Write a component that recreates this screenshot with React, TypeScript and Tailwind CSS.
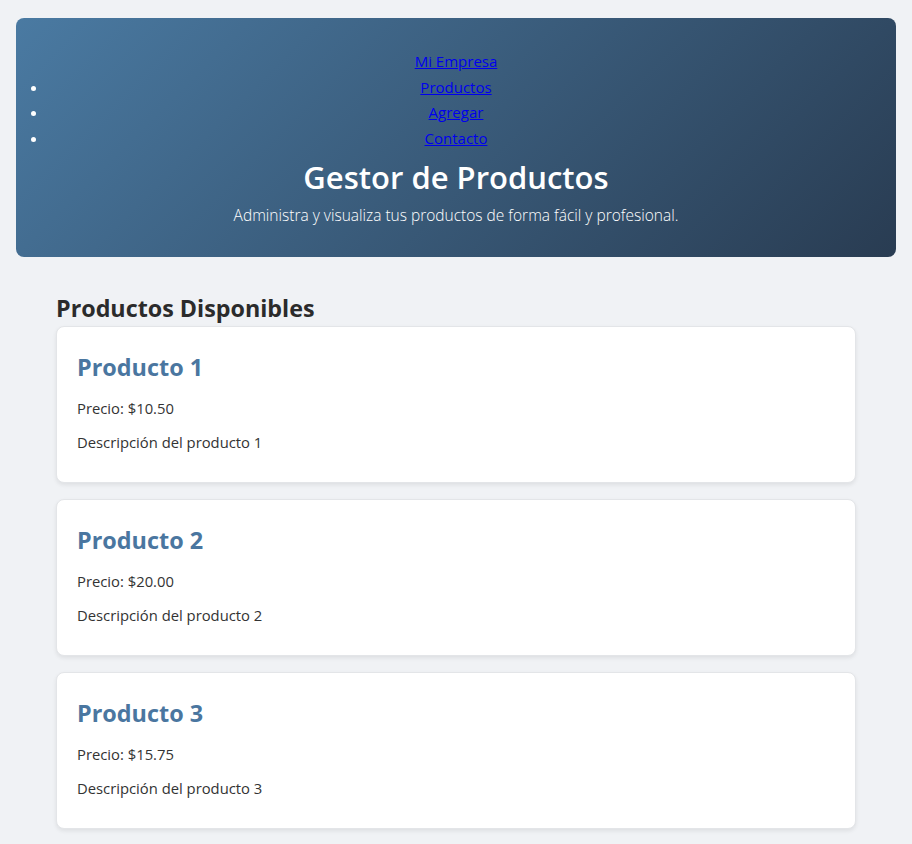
import React from 'react';

const productos = [
  { id: 1, nombre: 'Producto 1', precio: '10.50', descripcion: 'Descripción del producto 1' },
  { id: 2, nombre: 'Producto 2', precio: '20.00', descripcion: 'Descripción del producto 2' },
  { id: 3, nombre: 'Producto 3', precio: '15.75', descripcion: 'Descripción del producto 3' },
];

export default function App() {
  return (
    <div
      className="min-h-screen bg-[#f0f2f5] text-[#333] leading-[1.6]"
      style={{ fontFamily: '"Open Sans", "Noto Sans", sans-serif' }}
    >
      {/* cabecera */}
      <header className="mx-4 pt-[18px]">
        <div className="rounded-lg bg-[linear-gradient(135deg,#4a7aa2,#293c52)] px-8 pt-[31px] pb-[30px] text-center text-white">
          <nav className="text-[15px] leading-[25.6px]">
            <a href="#" className="text-[#0000ee] underline">Mi Empresa</a>
            <ul className="list-disc">
              <li><a href="#" className="text-[#0000ee] underline">Productos</a></li>
              <li><a href="#" className="text-[#0000ee] underline">Agregar</a></li>
              <li><a href="#" className="text-[#0000ee] underline">Contacto</a></li>
            </ul>
          </nav>
          <h1 className="mt-[6px] text-[31px] font-semibold leading-[1.3]">Gestor de Productos</h1>
          <p className="mt-[5px] text-[15.5px] font-light">
            Administra y visualiza tus productos de forma fácil y profesional.
          </p>
        </div>
      </header>

      {/* lista */}
      <main className="mx-auto mt-[36px] w-[800px] pb-4">
        <h2 className="text-[23.3px] font-bold leading-[1.3] text-[#2b2b2b]">Productos Disponibles</h2>
        <div className="mt-[2px] flex flex-col gap-[16px]">
          {productos.map(p => (
            <div
              key={p.id}
              className="rounded-lg border border-[#e3e5e8] bg-white px-5 pt-[21px] pb-[28px] shadow-[0_2px_4px_rgba(0,0,0,0.08)]"
            >
              <h3 className="text-[23.4px] font-bold leading-[38px] text-[#4a76a0]">{p.nombre}</h3>
              <p className="mt-[10px] text-[14.8px] leading-[24px]">Precio: ${p.precio}</p>
              <p className="mt-[10px] text-[14.8px] leading-[24px]">{p.descripcion}</p>
            </div>
          ))}
        </div>
      </main>
    </div>
  );
}
